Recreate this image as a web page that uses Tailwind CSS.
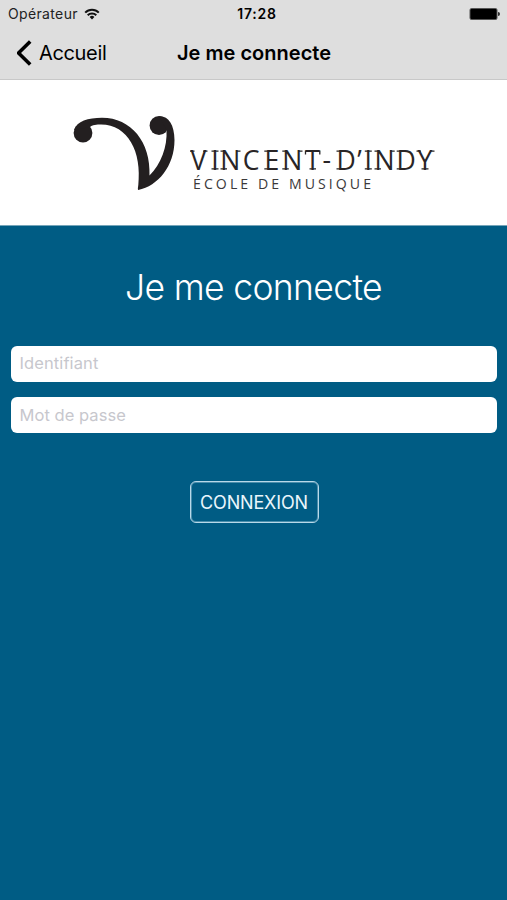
<!DOCTYPE html>
<html lang="fr">
<head>
<meta charset="utf-8">
<title>Je me connecte</title>
<script src="https://cdn.jsdelivr.net/npm/@tailwindcss/browser@4"></script>
</head>
<body class="flex h-[900px] w-[507px] flex-col overflow-hidden bg-[#005c84] font-['Inter','Liberation_Sans',sans-serif]">
<header class="h-[80px] shrink-0 border-b border-[#c8c8c8] bg-[#dedede] text-black">
  <div class="grid h-[27px] grid-cols-3 items-center pl-2 pr-[7px]">
    <div class="flex items-center gap-[6px]">
      <span class="text-[14px] tracking-[0.35px] text-[#222]">Opérateur</span>
      <svg class="h-[12px] w-[16px]" viewBox="0 0 16 12" fill="none" stroke="#111" stroke-width="2"><path d="M1.2 4.6a9.6 9.6 0 0 1 13.6 0M3.7 7.3a6.1 6.1 0 0 1 8.6 0"/><path d="M8 11.4 5.6 9a3.4 3.4 0 0 1 4.8 0Z" fill="#111" stroke="none"/></svg>
    </div>
    <span class="pl-[6px] text-center text-[14px] font-semibold tracking-[0.8px]">17:28</span>
    <svg class="h-[12px] w-[31px] justify-self-end" viewBox="0 0 31 12"><rect x="1" y=".5" width="27" height="11" rx="1.5" stroke="#555"/><path d="M29 4a2 2 0 0 1 0 4Z" fill="#333"/></svg>
  </div>
  <div class="grid h-[51px] grid-cols-[1fr_auto_1fr] items-center pl-[17px] pr-4">
    <div class="flex items-center gap-[6px]">
      <svg class="h-[26px] w-4" viewBox="0 0 16 26" fill="none" stroke="#000" stroke-width="3.6"><path d="M13.2 1.500 1.500 13l11.700 11.500"/></svg>
      <span class="text-[20px] tracking-[-0.35px]">Accueil</span>
    </div>
    <h1 class="text-[20px] font-semibold tracking-[0.02px]">Je me connecte</h1>
  </div>
</header>
<section class="h-[145px] shrink-0 bg-white">
  <svg class="h-[145px] w-[507px]" viewBox="0 80 507 145" role="img" aria-label="Vincent-d'Indy, École de musique">
    <g fill="#231f20">
      <circle cx="83" cy="133" r="9.4"/>
      <circle cx="159" cy="125.500" r="9.400"/>
      <path d="M74 130C77 121 88 117.700 102 117.700C131 117.700 151 142 149.500 175.500C161 164 167.500 147 166.500 130L159 116.200C168 115.500 174.500 124 174.500 140C174.500 166 158 186 138.200 190C137.600 189 138 187.500 138.300 185C142 152 128 124.500 101 124.500C97 124.500 92 125 90 127Z"/>
    </g>
    <text y="169.500" x="190.500 211.300 220.300 242.800 264.400 282.200 305.200 322.400 336.500 357.300 364.600 374.500 396.500 417.600" font-size="26.600" fill="#292526" class="font-['Open_Sans',sans-serif]">VINCENT<tspan dy="-.8">-</tspan><tspan dy=".8">D</tspan>’INDY</text>
    <!-- Slab ends of the wordmark's letters -->
    <path fill="none" stroke="#292526" stroke-width="1.300" d="M190 151.200h4.500M203 151.200h4.500M211.500 151.200h7M211.500 168.800h7M220.500 151.200h4M220.500 168.800h6.500M236 151.200h4.500M264.300 151.200h4M264.300 168.800h4M282.300 151.200h4M282.300 168.800h6.500M298 151.200h4.500M305.500 154.500v-3.300h14.300v3.300M309.500 168.800h6.500M336.500 151.200h4M336.500 168.800h4M364.800 151.200h7M364.800 168.800h7M374.500 151.200h4M374.500 168.800h6.500M390.200 151.200h4.500M396.700 151.200h4M396.700 168.800h4M416.500 151.200h4.500M430 151.200h4.500M421.500 168.800h7"/>
    <text x="193" y="188.800" font-size="14.100" textLength="178" fill="#3b393a" class="font-['Open_Sans',sans-serif]">ÉCOLE DE MUSIQUE</text>
  </svg>
</section>
<main class="flex flex-col items-center border-t border-[#75a5b9] px-[10.500px] pt-[38px]">
  <h2 class="h-12 text-[35.500px] leading-[48px] font-[350] tracking-[-0.650px] text-white">Je me connecte</h2>
  <form class="mt-[33.500px] flex w-full flex-col items-center">
    <input type="text" placeholder="Identifiant" class="h-[36px] w-full rounded-[6px] bg-white px-[9px] pb-[2px] text-[16.500px] tracking-[0.1px] placeholder:text-[#c7c7cd]">
    <input type="password" placeholder="Mot de passe" class="mt-[15.500px] h-[36px] w-full rounded-[6px] bg-white px-[9px] pb-px text-[16.500px] tracking-[0.05px] placeholder:text-[#c7c7cd]">
    <button type="button" class="mt-[47.500px] ml-px h-[42px] w-[129px] rounded-[6px] border border-[#b9d9e9] pt-px text-[18px] tracking-[-0.15px] text-[#eaf6fc] inset-shadow-[0_0_0_1px_#b9d9e966]">CONNEXION</button>
  </form>
</main>
</body>
</html>
